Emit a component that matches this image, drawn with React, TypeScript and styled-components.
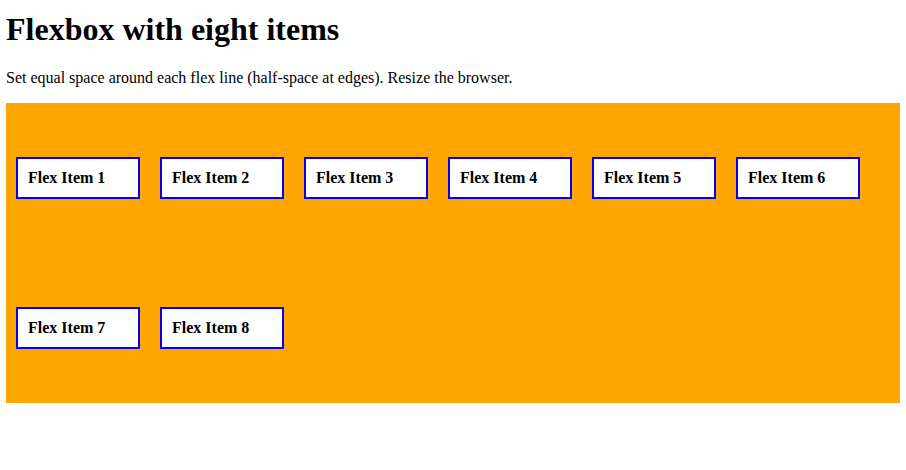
import React from "react";
import styled, { createGlobalStyle } from "styled-components";

const Global = createGlobalStyle`
  html, body { margin: 0; padding: 0; background: #fff; }
  body { font-family: "Liberation Serif", "Times New Roman", serif; color: #000; }
`;

const Page = styled.div`
  padding: 11px 6px 0 6px;
`;

const Title = styled.h1`
  font-size: 32px;
  font-weight: bold;
  margin: 0 0 21.44px 0;
`;

const Intro = styled.p`
  font-size: 16px;
  margin: 0 0 16px 0;
`;

const Container = styled.div`
  display: flex;
  flex-wrap: wrap;
  align-content: space-around;
  justify-content: flex-start;
  height: 300px;
  background: orange;
`;

const Item = styled.div`
  width: 100px;
  padding: 10px;
  margin: 10px;
  border: 2px solid blue;
  background: #fff;
  font-weight: bold;
  font-size: 16px;
`;

export default function App() {
  const items = Array.from({ length: 8 }, (_, i) => i + 1);
  return (
    <>
      <Global />
      <Page>
        <Title>Flexbox with eight items</Title>
        <Intro>Set equal space around each flex line (half-space at edges). Resize the browser.</Intro>
        <Container>
          {items.map((n) => (
            <Item key={n}>Flex Item {n}</Item>
          ))}
        </Container>
      </Page>
    </>
  );
}
